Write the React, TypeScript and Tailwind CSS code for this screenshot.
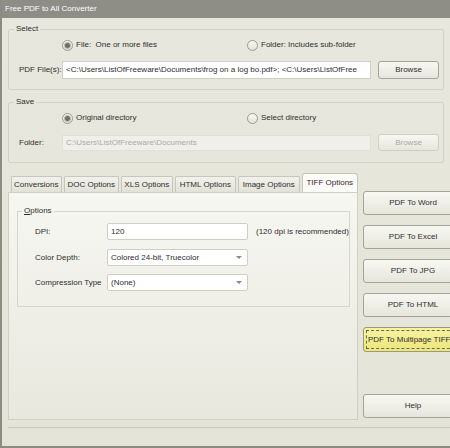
import React from 'react';

const font = { fontFamily: '"Liberation Sans", Arial, sans-serif' };

const Radio: React.FC<{ checked?: boolean; label: React.ReactNode }> = ({ checked, label }) => (
  <div className="flex items-center gap-[3px] h-[12px]">
    <span className="w-[11px] h-[11px] rounded-full border border-[#9a9a92] bg-gradient-to-b from-[#fafaf6] to-[#e2e2da] flex items-center justify-center shrink-0">
      {checked && <span className="w-[7px] h-[7px] rounded-full bg-[#6e6e6a] border border-[#bdbdb6]" />}
    </span>
    <span className="leading-[12px] text-[#2e2e2e] whitespace-pre">{label}</span>
  </div>
);

const Btn: React.FC<{ children: React.ReactNode; disabled?: boolean; className?: string }> = ({ children, disabled, className }) => (
  <div
    className={`flex items-center justify-center rounded-[3px] border bg-gradient-to-b from-[#f8f8f3] to-[#e6e6dc] whitespace-nowrap ${
      disabled ? 'border-[#cfcfc6] text-[#a9a9a2]' : 'border-[#a4a49c] text-[#2e2e2e]'
    } ${className || ''}`}
  >
    {children}
  </div>
);

const Select: React.FC<{ value: string }> = ({ value }) => (
  <div className="w-[141px] h-[17px] bg-white border border-[#cfcfc6] rounded-[2px] flex items-center justify-between pl-[3px] pr-[5px]">
    <span className="text-[#2e2e2e]">{value}</span>
    <span className="w-0 h-0 border-l-[3px] border-r-[3px] border-t-[3px] border-l-transparent border-r-transparent border-t-[#8a8a84]" />
  </div>
);

const tabs = [
  { label: 'Conversions', w: 51 },
  { label: 'DOC Options', w: 56 },
  { label: 'XLS Options', w: 52 },
  { label: 'HTML Options', w: 62 },
  { label: 'Image Options', w: 62 },
];

export default function App() {
  return (
    <div
      className="w-[450px] h-[448px] overflow-hidden bg-[#e7e7dd] border-l-2 border-b-2 border-[#8c8b84] text-[8px] text-[#2e2e2e] flex flex-col"
      style={font}
    >
      {/* Title bar */}
      <div className="h-[18px] shrink-0 bg-[#8e8d86] text-white text-[8px] flex items-center pl-[3px]">
        Free PDF to All Converter
      </div>

      <div className="flex-1 flex flex-col pl-[6px] pt-[6px] bg-gradient-to-b from-[#e7e7dd] to-[#e4e4d8]">
        {/* Select group */}
        <fieldset className="w-[436px] border border-[#d2d2c8] rounded-[2px] pb-[10px] m-0 p-0">
          <legend className="ml-[5px] px-[2px] leading-[10px] text-[#2e2e2e]">Select</legend>
          <div className="flex mt-[5px] pl-[53px]">
            <div className="w-[185px]">
              <Radio checked label="File:  One or more files" />
            </div>
            <Radio label="Folder: Includes sub-folder" />
          </div>
          <div className="flex items-center mt-[10px] h-[18px]">
            <span className="w-[53px] pl-[10px] shrink-0 whitespace-nowrap">PDF File(s):</span>
            <div className="w-[309px] h-[18px] bg-white border border-[#cfcfc6] flex items-center pl-[3px] whitespace-nowrap">
              &lt;C:\Users\ListOfFreeware\Documents\frog on a log bo.pdf&gt;; &lt;C:\Users\ListOfFree
            </div>
            <Btn className="ml-[7px] w-[61px] h-[18px]">Browse</Btn>
          </div>
        </fieldset>

        {/* Save group */}
        <fieldset className="w-[436px] border border-[#d2d2c8] rounded-[2px] pb-[11px] m-0 p-0 mt-[7px]">
          <legend className="ml-[5px] px-[2px] leading-[10px]">Save</legend>
          <div className="flex mt-[5px] pl-[53px]">
            <div className="w-[185px]">
              <Radio checked label="Original directory" />
            </div>
            <Radio label="Select directory" />
          </div>
          <div className="flex items-center mt-[10px] h-[17px]">
            <span className="w-[53px] pl-[10px] shrink-0">Folder:</span>
            <div className="w-[309px] h-[16px] bg-[#f0f0ea] border border-[#e0e0d8] flex items-center pl-[3px] text-[#aaaaa3]">
              C:\Users\ListOfFreeware\Documents
            </div>
            <Btn disabled className="ml-[7px] w-[61px] h-[17px]">Browse</Btn>
          </div>
        </fieldset>

        {/* Tabs + buttons */}
        <div className="flex mt-[9px]">
          <div className="w-[350px] shrink-0 flex flex-col">
            <div className="flex items-end h-[20px] pl-[3px] gap-[2px]">
              {tabs.map(t => (
                <div
                  key={t.label}
                  style={{ width: t.w }}
                  className="h-[16px] flex items-center justify-center bg-gradient-to-b from-[#f2f2ec] to-[#e2e2d8] border border-b-0 border-[#c6c6bc] rounded-t-[2px] whitespace-nowrap"
                >
                  {t.label}
                </div>
              ))}
              <div className="w-[57px] h-[19px] flex items-center justify-center bg-[#fbfbf8] border border-b-0 border-[#c6c6bc] rounded-t-[3px] text-[#3a2530] whitespace-nowrap">
                TIFF Options
              </div>
            </div>
            <div className="h-[228px] border border-[#cfcfc6] bg-gradient-to-b from-[#f7f7f2] to-[#e8e8de] pt-[13px] pl-[8px]">
              <fieldset className="w-[327px] border border-[#d6d6cc] m-0 p-0 pb-[15px]">
                <legend className="ml-[4px] px-[2px] leading-[10px]">
                  <span className="underline">O</span>ptions
                </legend>
                <div className="flex items-center mt-[7px] h-[17px]">
                  <span className="w-[89px] pl-[17px] shrink-0">DPI:</span>
                  <div className="w-[141px] h-[17px] bg-white border border-[#cfcfc6] rounded-[2px] flex items-center pl-[3px]">120</div>
                  <span className="ml-[8px] whitespace-nowrap">(120 dpi is recommended)</span>
                </div>
                <div className="flex items-center mt-[9px] h-[17px]">
                  <span className="w-[89px] pl-[17px] shrink-0">Color Depth:</span>
                  <Select value="Colored 24-bit, Truecolor" />
                </div>
                <div className="flex items-center mt-[8px] h-[17px]">
                  <span className="w-[89px] pl-[17px] shrink-0 whitespace-nowrap">Compression Type</span>
                  <Select value="(None)" />
                </div>
              </fieldset>
            </div>
          </div>

          <div className="flex flex-col ml-[5px] pt-[19px] w-[100px] shrink-0">
            <Btn className="h-[24px] w-[100px]">PDF To Word</Btn>
            <Btn className="h-[24px] w-[100px] mt-[10px]">PDF To Excel</Btn>
            <Btn className="h-[24px] w-[100px] mt-[10px]">PDF To JPG</Btn>
            <Btn className="h-[24px] w-[100px] mt-[10px]">PDF To HTML</Btn>
            <div className="h-[25px] w-[100px] mt-[10px] rounded-[3px] border border-[#9a9a80] bg-gradient-to-b from-[#f7f3a0] to-[#ece67c] p-[2px]">
              <div className="w-full h-full border border-dashed border-[#6a6a50] flex items-center justify-start pl-[1px] whitespace-nowrap text-[#2e2e2e]">
                PDF To Multipage TIFF
              </div>
            </div>
            <Btn className="h-[24px] w-[100px] mt-[42px]">Help</Btn>
          </div>
        </div>

        {/* status separator */}
        <div className="mt-[7px] border-t border-[#c9c9bf] flex-1" />
      </div>
    </div>
  );
}
